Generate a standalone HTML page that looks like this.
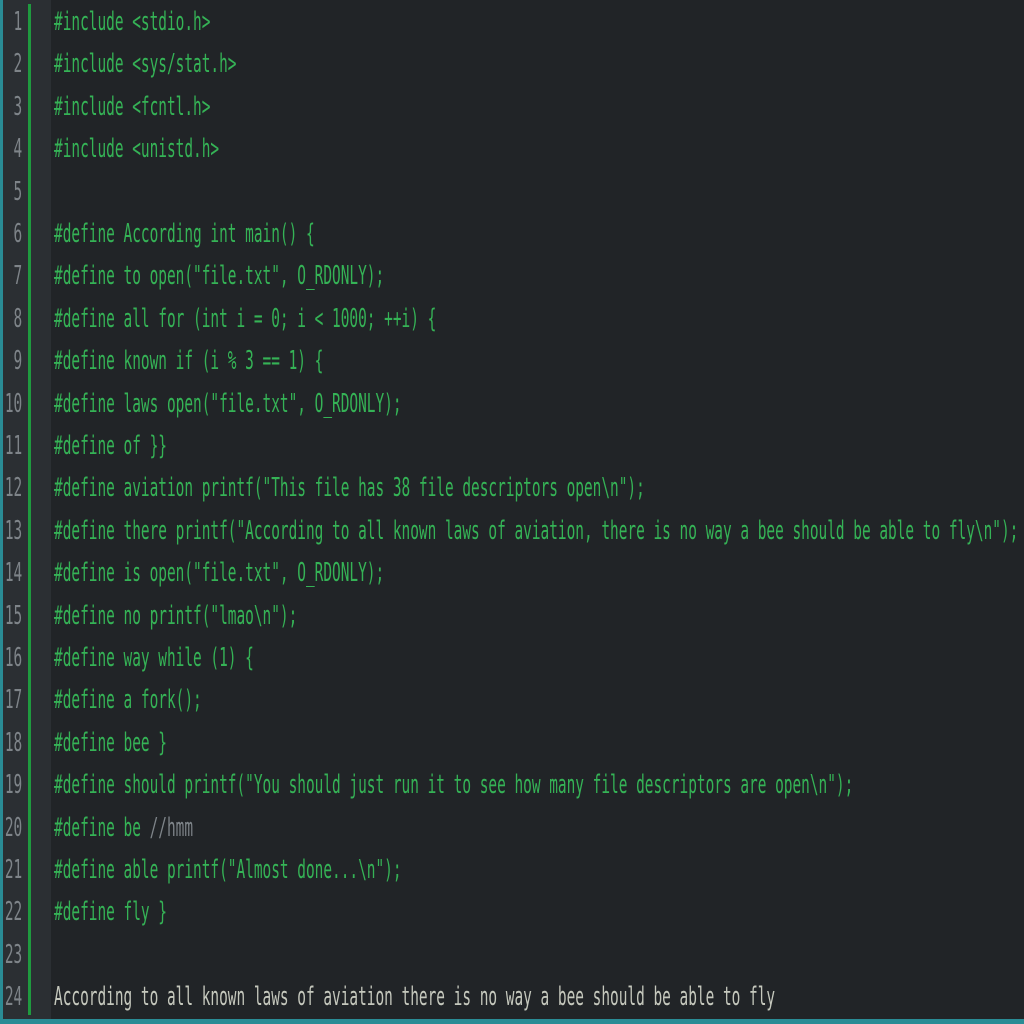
<!DOCTYPE html>
<html><head><style>
html,body{margin:0;padding:0;background:#212427;width:1024px;height:1024px;overflow:hidden}
#wrap{position:absolute;left:0;top:0;width:1024px;height:1024px;background:#212427;overflow:hidden}
#lb{position:absolute;left:0;top:0;width:3px;height:1024px;background:#2a8c95}
#bb{position:absolute;left:0;top:1019px;width:1024px;height:5px;background:#2a8c95}
#gut{position:absolute;left:3px;top:0;width:48px;height:1019px;background:#2b2f33}
#bar{position:absolute;left:28px;top:4px;width:3px;height:1011px;background:#1f9a3f}
.l{position:absolute;left:0;height:42px;line-height:42px;font-family:"DejaVu Sans Mono","Liberation Mono",monospace;font-size:26px;white-space:pre;transform:scaleX(0.555);transform-origin:0 0}
.n{color:#7e8489;width:40px;text-align:right}
.c{color:#35b356;left:54px}
.g{color:#7e8489}
.w{color:#c5c8bd}
</style></head><body><div id="wrap">
<div id="gut"></div><div id="bar"></div><div id="lb"></div><div id="bb"></div>
<div id="lines"></div>
</div>
<script>
var L=['#include <stdio.h>','#include <sys/stat.h>','#include <fcntl.h>','#include <unistd.h>','',
'#define According int main() {','#define to open("file.txt", O_RDONLY);','#define all for (int i = 0; i < 1000; ++i) {',
'#define known if (i % 3 == 1) {','#define laws open("file.txt", O_RDONLY);','#define of }}',
'#define aviation printf("This file has 38 file descriptors open\\n");',
'#define there printf("According to all known laws of aviation, there is no way a bee should be able to fly\\n");',
'#define is open("file.txt", O_RDONLY);','#define no printf("lmao\\n");','#define way while (1) {','#define a fork();',
'#define bee }','#define should printf("You should just run it to see how many file descriptors are open\\n");',
'#define be <span class="g">//hmm</span>','#define able printf("Almost done...\\n");','#define fly }','',
'<span class="w">According to all known laws of aviation there is no way a bee should be able to fly</span>'];
var h='';
for(var i=0;i<24;i++){var t=1+i*42.4;
h+='<div class="l n" style="top:'+t+'px;left:0">'+(i+1)+'</div>';
var s=L[i].indexOf('<span')>=0?L[i]:L[i].replace(/&/g,'&amp;').replace(/</g,'&lt;');
h+='<div class="l c" style="top:'+t+'px">'+s+'</div>';}
document.getElementById('lines').innerHTML=h;
</script>
</body></html>
